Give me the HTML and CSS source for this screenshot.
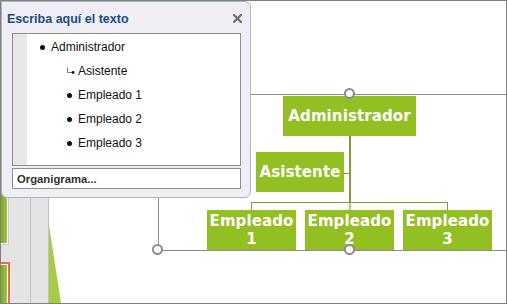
FILE: index.html
```html
<!DOCTYPE html>
<html lang="es">
<head>
<meta charset="utf-8">
<title>Organigrama</title>
<link rel="stylesheet" href="styles.css">
</head>
<body>
<div class="stage">
  <div class="sidebar">
    <div class="thumb-green"></div>
    <div class="thumb-orange"><div class="thumb-orange-inner"></div></div>
    <div class="sep"></div>
  </div>
  <svg class="tri" width="20" height="80" viewBox="0 0 20 80"><polygon points="1,0 13,78 1,78" fill="#a6cb47"/></svg>

  <div class="canvas">
    <div class="line h sel-top"></div>
    <div class="line v sel-left"></div>
    <div class="line h sel-bottom"></div>

    <div class="conn v c-main"></div>
    <div class="conn v c-main-low"></div>
    <div class="conn h c-asst"></div>
    <div class="conn h c-bar"></div>
    <div class="conn v c-t1"></div>
    <div class="conn v c-t3"></div>

    <div class="node n-admin">Administrador</div>
    <div class="node n-asst">Asistente</div>
    <div class="node n-e1">Empleado<br>1</div>
    <div class="node n-e2">Empleado<br>2</div>
    <div class="node n-e3">Empleado<br>3</div>

    <div class="handle hd-top"></div>
    <div class="handle hd-bottom"></div>
    <div class="handle hd-corner"></div>
  </div>

  <div class="panel">
    <div class="panel-head">
      <span class="panel-title">Escriba aquí el texto</span>
      <svg class="panel-close" width="9" height="9" viewBox="0 0 9 9"><path d="M1 1L8 8M8 1L1 8" stroke="#6e6e6e" stroke-width="2.2" stroke-linecap="square"/></svg>
    </div>
    <div class="editor">
      <div class="gutter"></div>
      <ul class="items">
        <li class="item lvl1"><span class="dot"></span>Administrador</li>
        <li class="item lvl2"><svg class="asst-ico" width="9" height="7" viewBox="0 0 9 7"><path d="M1.5 0.5V5.5H6" fill="none" stroke="#777" stroke-width="1"/><circle cx="7" cy="5.5" r="1.4" fill="#111"/></svg>Asistente</li>
        <li class="item lvl2"><span class="dot"></span>Empleado 1</li>
        <li class="item lvl2"><span class="dot"></span>Empleado 2</li>
        <li class="item lvl2"><span class="dot"></span>Empleado 3</li>
      </ul>
    </div>
    <div class="panel-foot">Organigrama...</div>
  </div>
</div>
</body>
</html>
```
FILE: styles.css
```css
html, body {
  margin: 0;
  padding: 0;
  background: #ffffff;
}
.stage {
  position: relative;
  width: 507px;
  height: 304px;
  box-sizing: border-box;
  border: 1px solid #7f7f7f;
  overflow: hidden;
  background: #ffffff;
}
.sidebar {
  position: absolute;
  left: 0;
  top: 0;
  width: 47px;
  height: 303px;
  background: #e4e4e4;
  border-right: 1px solid #c2c2c2;
}
.sep {
  position: absolute;
  left: 29px;
  top: 0;
  width: 1px;
  height: 100%;
  background: #c2c2c2;
}
.thumb-green {
  position: absolute;
  left: 0;
  top: 140px;
  width: 6px;
  height: 102px;
  background: linear-gradient(90deg, #7fa72c, #9cc63e);
  border-right: 1px solid #ffffff;
  border-bottom: 1px solid #ffffff;
  box-shadow: 1px 1px 0 #c8c8c8;
}
.thumb-orange {
  position: absolute;
  left: 0;
  top: 261px;
  width: 7px;
  height: 50px;
  border-top: 2px solid #ef6b4b;
  border-right: 2px solid #ef6b4b;
  background: #ffffff;
}
.thumb-orange-inner {
  margin: 1px 1px 0 0;
  height: 100%;
  background: linear-gradient(90deg, #7fa72c, #9cc63e);
}
.tri {
  position: absolute;
  left: 47px;
  top: 224px;
}

.canvas {
  position: absolute;
  inset: 0;
}
.line {
  position: absolute;
  background: #8c8c8c;
}
.sel-top { left: 157px; top: 93px; width: 360px; height: 1px; }
.sel-bottom { left: 157px; top: 249px; width: 360px; height: 1px; }
.sel-left { left: 157px; top: 93px; width: 1px; height: 157px; }

.conn {
  position: absolute;
  background: #7d9f36;
}
.c-main { left: 348px; top: 134px; width: 2px; height: 68px; }
.c-main-low { left: 348px; top: 201px; width: 2px; height: 9px; background: #b3cf7d; }
.c-asst { left: 343px; top: 172px; width: 6px; height: 1px; }
.c-bar { left: 250px; top: 201px; width: 197px; height: 1px; }
.c-t1 { left: 250px; top: 201px; width: 1px; height: 9px; }
.c-t3 { left: 446px; top: 201px; width: 1px; height: 9px; }

.node {
  position: absolute;
  background: #92c023;
  color: #ffffff;
  font-family: "DejaVu Sans", Verdana, sans-serif;
  font-weight: bold;
  font-size: 15px;
  text-align: center;
  display: flex;
  align-items: center;
  justify-content: center;
  letter-spacing: 0.1px;
}
.n-admin { left: 282px; top: 95px; width: 133px; height: 40px; }
.n-asst { left: 255px; top: 151px; width: 88px; height: 40px; }
.n-e1, .n-e2, .n-e3 {
  top: 209px;
  width: 89px;
  height: 40px;
  line-height: 18px;
}
.n-e1 { left: 206px; }
.n-e2 { left: 304px; }
.n-e3 { left: 402px; }

.handle {
  position: absolute;
  width: 7px;
  height: 7px;
  border: 2px solid #8c8c8c;
  border-radius: 50%;
  background: #ffffff;
}
.hd-top { left: 343px; top: 87px; }
.hd-bottom { left: 343px; top: 243px; }
.hd-corner { left: 151px; top: 243px; }

.panel {
  position: absolute;
  left: 0;
  top: 0;
  width: 250px;
  height: 197px;
  box-sizing: border-box;
  background: #eeeef4;
  border: 1px solid #a9b7b9;
  border-radius: 0 6px 6px 6px;
  display: flex;
  flex-direction: column;
  padding: 0 9px 0 10px;
  font-family: "Liberation Sans", Arial, sans-serif;
}
.panel-head {
  height: 31px;
  display: flex;
  align-items: center;
  justify-content: space-between;
  margin-left: -5px;
  margin-right: -1px;
}
.panel-title {
  color: #1e4d7c;
  font-weight: bold;
  font-size: 12.5px;
  padding-top: 2px;
}
.panel-close {
  flex: none;
  margin-top: 2px;
}
.editor {
  height: 133px;
  box-sizing: border-box;
  border: 1px solid #8e8e8e;
  background: #ffffff;
  display: flex;
}
.gutter {
  width: 14px;
  background: #e7e7e7;
  flex: none;
}
.items {
  list-style: none;
  margin: 0;
  padding: 1px 0 0 0;
  flex: 1;
}
.item {
  height: 24px;
  display: flex;
  align-items: center;
  font-size: 12px;
  color: #111111;
}
.lvl1 { padding-left: 13px; }
.lvl2 { padding-left: 40px; }
.dot {
  width: 5px;
  height: 5px;
  border-radius: 50%;
  background: #111111;
  margin-right: 6px;
  flex: none;
}
.asst-ico {
  margin-left: -1px;
  margin-right: 3px;
  flex: none;
  position: relative;
  top: -1px;
}
.panel-foot {
  margin-top: 2px;
  height: 21px;
  box-sizing: border-box;
  border: 1px solid #8e8e8e;
  background: #ffffff;
  font-size: 11.3px;
  font-weight: bold;
  color: #333333;
  display: flex;
  align-items: center;
  padding-left: 4px;
}
```
